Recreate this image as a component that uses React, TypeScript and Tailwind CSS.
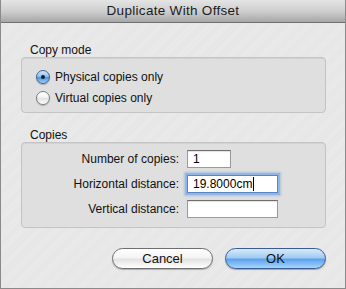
import React from 'react'

const font = { fontFamily: '"Liberation Sans", Arial, sans-serif' }

function Radio({ checked, label }: { checked: boolean; label: string }) {
  return (
    <div className="flex h-[21px] items-center">
      <span
        className={
          checked
            ? 'ml-[14px] flex h-[14px] w-[14px] items-center justify-center rounded-full border border-[#3f5f92] bg-[linear-gradient(180deg,#d5e8fb_0%,#8fc0f1_45%,#4f93df_55%,#9fd0fb_100%)] shadow-[0_1px_1px_rgba(0,0,0,0.25)]'
            : 'ml-[14px] flex h-[14px] w-[14px] items-center justify-center rounded-full border border-[#7d7d7d] bg-[linear-gradient(180deg,#ffffff_0%,#f2f2f2_45%,#e2e2e2_55%,#ffffff_100%)] shadow-[0_1px_1px_rgba(0,0,0,0.2)]'
        }
      >
        {checked && <span className="h-[4px] w-[4px] rounded-full bg-[#10203c]" />}
      </span>
      <span className="ml-[5px] text-[12px] leading-[14px] text-[#111]">{label}</span>
    </div>
  )
}

function Field({ label, value, wide, focused }: { label: string; value?: string; wide?: boolean; focused?: boolean }) {
  return (
    <div className="flex h-[18px] items-center">
      <span className="w-[158px] pr-[1px] text-right text-[12px] leading-[14px] text-[#111]">{label}</span>
      <div
        className={
          (wide ? 'w-[91px] ' : 'w-[44px] ') +
          'ml-[7px] flex h-[18px] items-center border bg-white pl-[5px] text-[12px] leading-[14px] text-black ' +
          (focused
            ? 'border-[#5a84c0] shadow-[0_0_0_2px_#8fb6e6,0_0_2px_3px_rgba(110,160,220,0.45)]'
            : 'border-[#9a9a9a] border-t-[#6f6f6f] shadow-[inset_0_1px_1px_rgba(0,0,0,0.12)]')
        }
      >
        {value}
        {focused && <span className="ml-px h-[14px] w-px bg-black" />}
      </div>
    </div>
  )
}

export default function App() {
  return (
    <div
      className="flex h-[289px] w-[346px] flex-col border-x border-b border-[#8a8a8a] bg-[#e9e9e9] bg-[repeating-linear-gradient(135deg,#ebebeb_0px,#ebebeb_1px,#e5e5e5_1px,#e5e5e5_2px)]"
      style={font}
    >
      {/* Barre de titre */}
      <div className="flex h-[23px] shrink-0 items-center justify-center border-b border-[#707070] bg-[linear-gradient(180deg,#e4e4e4_0%,#cfcfcf_50%,#a7a7a7_100%)]">
        <span className="text-[13.5px] leading-[16px] tracking-[0.3px] text-[#1c1c1c]">Duplicate With Offset</span>
      </div>

      <div className="flex flex-col pl-[20px] pr-[19px]">
        {/* Copy mode */}
        <div className="mt-[20px] h-[14px] pl-[9px] text-[12px] leading-[14px] text-[#111]">Copy mode</div>
        <div className="h-[56px] rounded-[4px] border border-[#c4c4c4] bg-[#dfdfdf] pt-[8px] shadow-[inset_0_1px_1px_rgba(0,0,0,0.06)]">
          <Radio checked label="Physical copies only" />
          <Radio checked={false} label="Virtual copies only" />
        </div>

        {/* Copies */}
        <div className="mt-[15px] h-[14px] pl-[9px] text-[12px] leading-[14px] text-[#111]">Copies</div>
        <div className="flex h-[86px] flex-col gap-[7px] rounded-[4px] border border-[#c4c4c4] bg-[#dfdfdf] pt-[7px] shadow-[inset_0_1px_1px_rgba(0,0,0,0.06)]">
          <Field label="Number of copies:" value="1" />
          <Field label="Horizontal distance:" value="19.8000cm" wide focused />
          <Field label="Vertical distance:" wide />
        </div>

        {/* Boutons */}
        <div className="mt-[20px] flex justify-end gap-[12px]">
          <button className="flex h-[21px] w-[101px] items-center justify-center rounded-full border border-[#6e6e6e] bg-[linear-gradient(180deg,#ffffff_0%,#f4f4f4_45%,#e3e3e3_55%,#ffffff_100%)] text-[13px] leading-[15px] text-[#111] shadow-[0_1px_1px_rgba(0,0,0,0.25)]">
            Cancel
          </button>
          <button className="flex h-[21px] w-[101px] items-center justify-center rounded-full border border-[#3a5c96] bg-[linear-gradient(180deg,#d7eafc_0%,#a2cbf4_45%,#5ea2ec_55%,#a6d6fd_100%)] text-[13px] leading-[15px] text-[#111] shadow-[0_1px_1px_rgba(0,0,0,0.3)]">
            OK
          </button>
        </div>
      </div>
    </div>
  )
}
